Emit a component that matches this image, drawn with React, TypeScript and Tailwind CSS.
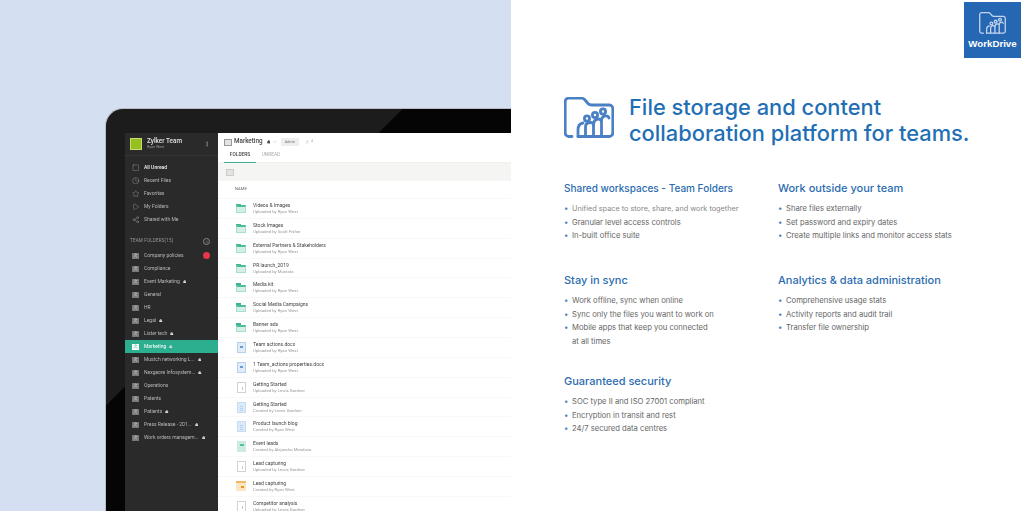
import { Clock, Star, Play, Share2, Square, MoreVertical, Lock, ChevronDown, Plus, User } from "lucide-react";

const navItems = [
  { label: "All Unread", Icon: Square, bright: true },
  { label: "Recent Files", Icon: Clock },
  { label: "Favorites", Icon: Star },
  { label: "My Folders", Icon: Play },
  { label: "Shared with Me", Icon: Share2 },
];

const teamFolders = [
  { label: "Company policies", badge: true },
  { label: "Compliance" },
  { label: "Event Marketing", lock: true },
  { label: "General" },
  { label: "HR" },
  { label: "Legal", lock: true },
  { label: "Lister tech", lock: true },
  { label: "Marketing", lock: true, active: true },
  { label: "Mustch networking L...", lock: true },
  { label: "Nexgeore Infosystem...", lock: true },
  { label: "Operations" },
  { label: "Patents" },
  { label: "Patients", lock: true },
  { label: "Press Release - 201...", lock: true },
  { label: "Work orders managem...", lock: true },
];

type FileKind = "folder" | "doc" | "blank" | "writer" | "sheet" | "slide";

const files: { name: string; by: string; kind: FileKind }[] = [
  { name: "Videos & Images", by: "Uploaded by Ryan West", kind: "folder" },
  { name: "Stock Images", by: "Uploaded by Scott Fisher", kind: "folder" },
  { name: "External Partners & Stakeholders", by: "Uploaded by Ryan West", kind: "folder" },
  { name: "PR launch_2019", by: "Uploaded by Mustafa", kind: "folder" },
  { name: "Media kit", by: "Uploaded by Ryan West", kind: "folder" },
  { name: "Social Media Campaigns", by: "Uploaded by Ryan West", kind: "folder" },
  { name: "Banner ads", by: "Uploaded by Ryan West", kind: "folder" },
  { name: "Team actions.docx", by: "Uploaded by Ryan West", kind: "doc" },
  { name: "1 Team_actions properties.docx", by: "Uploaded by Ryan West", kind: "doc" },
  { name: "Getting Started", by: "Uploaded by Lewis Gardner", kind: "blank" },
  { name: "Getting Started", by: "Created by Lewis Gardner", kind: "writer" },
  { name: "Product launch blog", by: "Created by Ryan West", kind: "writer" },
  { name: "Event leads", by: "Created by Alejandro Mendoza", kind: "sheet" },
  { name: "Lead capturing", by: "Uploaded by Lewis Gardner", kind: "blank" },
  { name: "Lead capturing", by: "Created by Ryan West", kind: "slide" },
  { name: "Competitor analysis", by: "Uploaded by Lewis Gardner", kind: "blank" },
];

const sections = [
  {
    title: "Shared workspaces - Team Folders",
    small: true,
    items: ["Unified space to store, share, and work together", "Granular level access controls", "In-built office suite"],
  },
  {
    title: "Work outside your team",
    items: ["Share files externally", "Set password and expiry dates", "Create multiple links and monitor access stats"],
  },
  {
    title: "Stay in sync",
    items: ["Work offline, sync when online", "Sync only the files you want to work on", "Mobile apps that keep you connected\nat all times"],
  },
  {
    title: "Analytics & data administration",
    items: ["Comprehensive usage stats", "Activity reports and audit trail", "Transfer file ownership"],
  },
  {
    title: "Guaranteed security",
    items: ["SOC type II and ISO 27001 compliant", "Encryption in transit and rest", "24/7 secured data centres"],
  },
];

function DriveIcon({ className, weight = 2.8 }: { className: string; weight?: number }) {
  return (
    <svg viewBox="0 0 50 41" fill="none" stroke="currentColor" strokeWidth={weight} strokeLinecap="round" strokeLinejoin="round" className={className}>
      <path d="M8 39.5H4.5A3.5 3.5 0 0 1 1.2 36V4.5A3.5 3.5 0 0 1 4.5 1.2H17.5C19 1.2 20 1.8 21 3L24 6.5C25 7.6 26 8 27.5 8H45.5A3.5 3.5 0 0 1 48.8 11.5V36A3.5 3.5 0 0 1 45.5 39.5H14" />
      <circle cx="23" cy="21.5" r="2.6" />
      <circle cx="31" cy="18" r="2.6" />
      <circle cx="39" cy="14.5" r="2.6" />
      <path d="M14 39.5V33C14 29 16 26.5 19 26" />
      <path d="M21.5 39.5V30C21.5 26.5 23.5 25.5 26.5 25.5C28 25.5 29.5 26 29.5 28V39.5" />
      <path d="M29.5 27C30 23.5 32 22 34.5 22C36.5 22 37.5 23 37.5 25V39.5" />
      <path d="M37.5 23C38 20 40 18.8 42 18.8C43.5 18.8 44.5 19.5 45 21" />
    </svg>
  );
}

function FileIcon({ kind }: { kind: FileKind }) {
  if (kind === "folder") {
    return (
      <div className="w-[10px] h-[9px] flex flex-col">
        <div className="w-[5px] h-[1.5px] bg-[#3fb394]" />
        <div className="flex-1 bg-[#d5efe7] border border-[#a5dfcf] border-t-2 border-t-[#4fbb9e]" />
      </div>
    );
  }
  if (kind === "doc") {
    return (
      <div className="w-[9px] h-[11px] bg-[#e2ecf8] border-[0.5px] border-[#b7d0ec] pl-[2px] pt-[3px]">
        <div className="w-[3px] h-[2px] bg-[#6a9ad2]" />
      </div>
    );
  }
  if (kind === "writer") {
    return (
      <div className="w-[9px] h-[11px] bg-[#dce9f9] border-[0.5px] border-[#c6dcf3] flex flex-col gap-px pl-[2px] pr-[2px] pt-[3px]">
        <div className="h-px bg-[#b4d0ee]" />
        <div className="h-px bg-[#b4d0ee]" />
        <div className="h-px bg-[#b4d0ee]" />
      </div>
    );
  }
  if (kind === "sheet") {
    return (
      <div className="w-[9px] h-[11px] bg-[#cdebe2] pl-[3px] pt-[3px]">
        <div className="w-[4px] h-[2px] bg-[#56bda1]" />
      </div>
    );
  }
  if (kind === "slide") {
    return (
      <div className="w-[10px] h-[10px] bg-[#fbe6c4] border-t-2 border-[#f3b768] pl-[5px] pt-[3px]">
        <div className="w-[3px] h-[2px] bg-[#ee9128]" />
      </div>
    );
  }
  return (
    <div className="w-[9px] h-[11px] bg-white border-[0.5px] border-[#d2d2d2] pl-[4px] pt-[4px]">
      <div className="w-px h-[3px] bg-[#c4c4c4]" />
    </div>
  );
}

function TeamIcon({ active }: { active?: boolean }) {
  return (
    <div className={`w-[7px] h-[6px] flex items-center justify-center ${active ? "bg-white" : "bg-[#777]"}`}>
      <User className={`w-[5px] h-[5px] ${active ? "text-[#2baf8f]" : "text-[#ddd]"}`} strokeWidth={2} />
    </div>
  );
}

function Sidebar() {
  return (
    <div className="w-[93px] h-full shrink-0 bg-[#2a2a2a] text-[#b8b8b8] font-['Roboto',sans-serif]">
      <div className="h-[23px] flex items-center pl-[5px] pr-[8px] border-b border-[#363636]">
        <div className="w-[12px] h-[12px] bg-[#94bf1e] border border-[#c5dd72] shrink-0" />
        <div className="ml-[5px] flex-1 -mt-[2px]">
          <div className="text-[6.4px] leading-[7px] font-medium text-[#e0e0e0]">Zylker Team</div>
          <div className="text-[3.7px] leading-[4px] text-[#999]">Ryan West</div>
        </div>
        <MoreVertical className="w-[6px] h-[8px] text-[#bbb]" />
      </div>
      <div className="pt-[5px]">
        {navItems.map(({ label, Icon, bright }) => (
          <div key={label} className="h-[13px] flex items-center pl-[7px] gap-[4.5px]">
            <Icon className="w-[7.5px] h-[7.5px] text-[#999]" strokeWidth={1.5} />
            <span className={`text-[5px] ${bright ? "font-medium text-[#eee]" : "text-[#b8b8b8]"}`}>{label}</span>
          </div>
        ))}
      </div>
      <div className="mt-[9px] h-[13px] flex items-center justify-between pl-[5px] pr-[8px]">
        <span className="text-[4.5px] text-[#999] tracking-[0.2px]">TEAM FOLDERS(15)</span>
        <div className="w-[7px] h-[7px] rounded-full border-[0.5px] border-[#888] flex items-center justify-center">
          <Plus className="w-[4px] h-[4px] text-[#999]" />
        </div>
      </div>
      <div className="mt-[1px]">
        {teamFolders.map(({ label, lock, badge, active }) => (
          <div
            key={label}
            className={`h-[13px] flex items-center pl-[7px] pr-[8px] ${active ? "bg-[#2baf8f] text-white" : ""}`}
          >
            <TeamIcon active={active} />
            <span className="ml-[5px] text-[5px] whitespace-nowrap">{label}</span>
            {lock && <Lock className="ml-[3px] w-[3.5px] h-[3.5px] text-[#ddd]" fill="currentColor" />}
            {badge && <div className="ml-auto w-[7px] h-[7px] rounded-full bg-[#e5364a]" />}
          </div>
        ))}
      </div>
    </div>
  );
}

function FileList() {
  return (
    <div className="flex-1 h-full bg-white font-['Roboto',sans-serif] overflow-hidden">
      <div className="h-[16px] flex items-center pl-[6px] gap-[2px] pt-[2px]">
        <div className="w-[8px] h-[7px] bg-[#e4e4e4] border-[0.5px] border-[#999]" />
        <span className="text-[6.3px] font-medium text-[#444]">Marketing</span>
        <Lock className="ml-[2px] w-[3.5px] h-[3.5px] text-[#444]" fill="currentColor" />
        <ChevronDown className="ml-[1px] w-[4px] h-[4px] text-[#888]" />
        <div className="ml-[2px] w-[18px] h-[8px] bg-[#eee] text-[3.7px] leading-[8px] text-center text-[#777]">Admin</div>
        <User className="ml-[4px] w-[4px] h-[4px] text-[#bbb]" />
        <span className="text-[3.5px] text-[#aaa]">4</span>
      </div>
      <div className="h-[14px] flex pl-[6px] border-b border-[#f0f0ee]">
        <div className="w-[32px] h-[13.5px] border-b border-[#3fb394] text-[4.8px] leading-[12px] font-medium text-center text-[#444]">FOLDERS</div>
        <div className="w-[30px] text-[4.8px] leading-[12px] text-center text-[#aaa]">UNREAD</div>
      </div>
      <div className="h-[18px] bg-[#f5f5f3] flex items-center pl-[8px]">
        <div className="w-[8px] h-[7px] bg-[#e4e4e2] border-[0.5px] border-[#ccc]" />
      </div>
      <div className="h-[18px] flex items-center pl-[17px] text-[4.2px] text-[#666] border-b border-[#f8f8f8]">NAME</div>
      <div>
        {files.map((file, i) => (
          <div key={i} className="h-[19.87px] flex items-center pl-[18px] gap-[7px] border-b border-[#f8f8f8]">
            <div className="w-[10px] flex justify-center">
              <FileIcon kind={file.kind} />
            </div>
            <div>
              <div className="text-[5px] leading-[7px] text-[#444]">{file.name}</div>
              <div className="text-[4.3px] leading-[6px] text-[#999]">{file.by}</div>
            </div>
          </div>
        ))}
      </div>
    </div>
  );
}

export default function App() {
  return (
    <div className="relative w-[1024px] h-[511px] flex bg-white overflow-hidden font-['Inter',sans-serif]">
      <div className="w-[511px] h-full shrink-0 bg-[#d4dff1] pt-[108px] pl-[105px] overflow-hidden">
        <div className="w-[406px] h-[403px] rounded-tl-[18px] border-l border-t border-[#b9bcc4] bg-[linear-gradient(135deg,#1c1c1c_210px,#050505_210px)] pt-[24px] pl-[19px]">
          <div className="h-full flex blur-[0.5px]">
            <Sidebar />
            <FileList />
          </div>
        </div>
      </div>

      <div className="flex-1 pl-[53px] pt-[95px]">
        <div className="flex items-start">
          <DriveIcon className="w-[50px] h-[41px] mt-[2px] text-[#4a80c4]" />
          <h1 className="ml-[15px] text-[21.85px] leading-[25.5px] font-medium text-[#1f6fb5]">
            File storage and content
            <br />
            collaboration platform for teams.
          </h1>
        </div>

        <div className="mt-[34px] grid grid-cols-[214px_214px] grid-rows-[92px_101px]">
          {sections.map((section) => (
            <div key={section.title}>
              <h2 className={`${section.small ? "text-[10px]" : "text-[11px]"} leading-[16px] text-[#2b6cb0] font-medium`}>
                {section.title}
              </h2>
              <ul className="mt-[6px]">
                {section.items.map((item) => (
                  <li key={item} className="flex text-[7.65px] leading-[13.6px] text-[#666]">
                    <span className="w-[8px] shrink-0 text-[#4a80c4]">•</span>
                    <span className={`whitespace-pre-line ${item.startsWith("Unified") ? "text-[7.3px] text-[#888]" : ""}`}>{item}</span>
                  </li>
                ))}
              </ul>
            </div>
          ))}
        </div>
      </div>

      <div className="absolute left-[964px] top-[2px] w-[57px] h-[56px] bg-[#2567b3] flex flex-col items-center pt-[10px]">
        <DriveIcon className="w-[27px] h-[22px] text-[#c3d6ee]" weight={2.4} />
        <span className="mt-[3px] text-[9.7px] leading-[13px] font-bold text-white font-['Liberation_Sans',sans-serif]">WorkDrive</span>
      </div>
    </div>
  );
}
